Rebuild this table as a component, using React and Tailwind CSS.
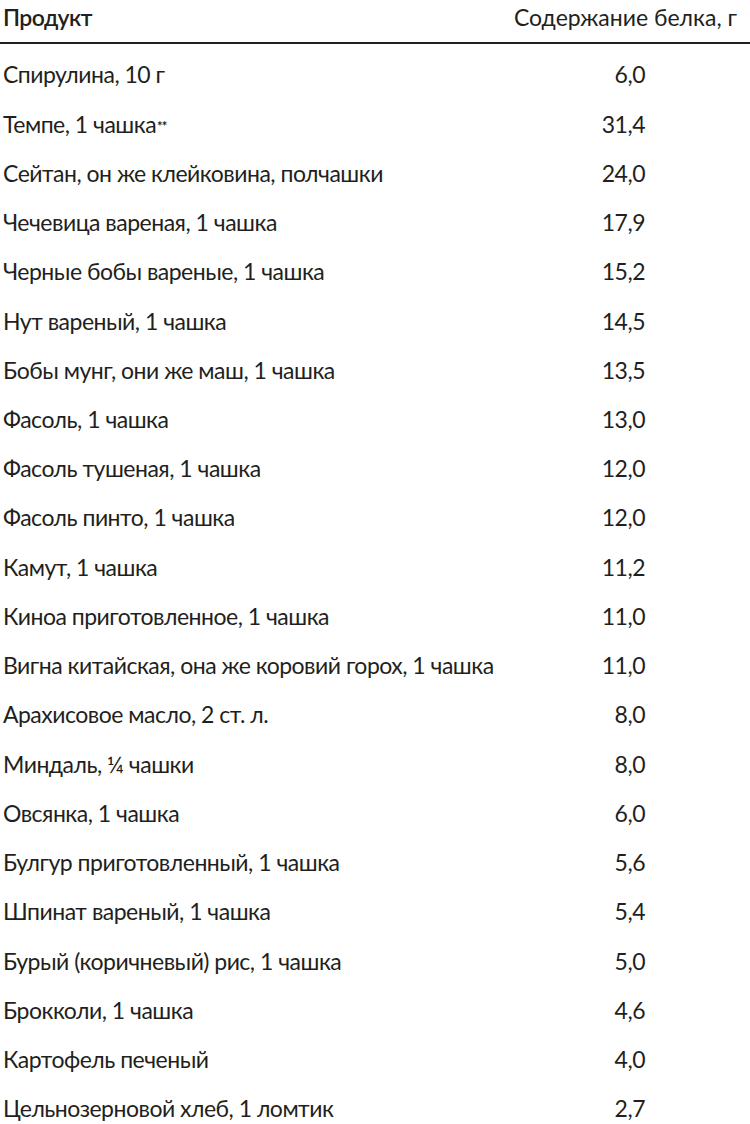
import React from "react";

const rows = [
  ["Спирулина, 10 г", "6,0"],
  ["Темпе, 1 чашка", "31,4", true],
  ["Сейтан, он же клейковина, полчашки", "24,0"],
  ["Чечевица вареная, 1 чашка", "17,9"],
  ["Черные бобы вареные, 1 чашка", "15,2"],
  ["Нут вареный, 1 чашка", "14,5"],
  ["Бобы мунг, они же маш, 1 чашка", "13,5"],
  ["Фасоль, 1 чашка", "13,0"],
  ["Фасоль тушеная, 1 чашка", "12,0"],
  ["Фасоль пинто, 1 чашка", "12,0"],
  ["Камут, 1 чашка", "11,2"],
  ["Киноа приготовленное, 1 чашка", "11,0"],
  ["Вигна китайская, она же коровий горох, 1 чашка", "11,0"],
  ["Арахисовое масло, 2 ст. л.", "8,0"],
  ["Миндаль, ¼ чашки", "8,0"],
  ["Овсянка, 1 чашка", "6,0"],
  ["Булгур приготовленный, 1 чашка", "5,6"],
  ["Шпинат вареный, 1 чашка", "5,4"],
  ["Бурый (коричневый) рис, 1 чашка", "5,0"],
  ["Брокколи, 1 чашка", "4,6"],
  ["Картофель печеный", "4,0"],
  ["Цельнозерновой хлеб, 1 ломтик", "2,7"],
];

export default function App() {
  return (
    <div className="w-[750px] h-[1124px] bg-white text-[#231f20] font-['Lato',sans-serif] text-[23px] tracking-[-0.5px] overflow-hidden">
      <div className="h-[44px] flex items-start justify-between pl-[3px] pr-[13px] border-b-2 border-[#231f20]">
        <span className="font-semibold">Продукт</span>
        <span className="tracking-normal">Содержание белка, г</span>
      </div>
      <div className="pt-[6px]">
        {rows.map(([name, val, star]) => (
          <div key={name} className="h-[49.24px] flex items-center pl-[3px] pr-[105px]">
            <span className="flex-1">
              {name}
              {star && <sup className="text-[13px] font-bold relative -top-[2px] ml-[1px] tracking-[-1px]">**</sup>}
            </span>
            <span className="text-right">{val}</span>
          </div>
        ))}
      </div>
    </div>
  );
}
